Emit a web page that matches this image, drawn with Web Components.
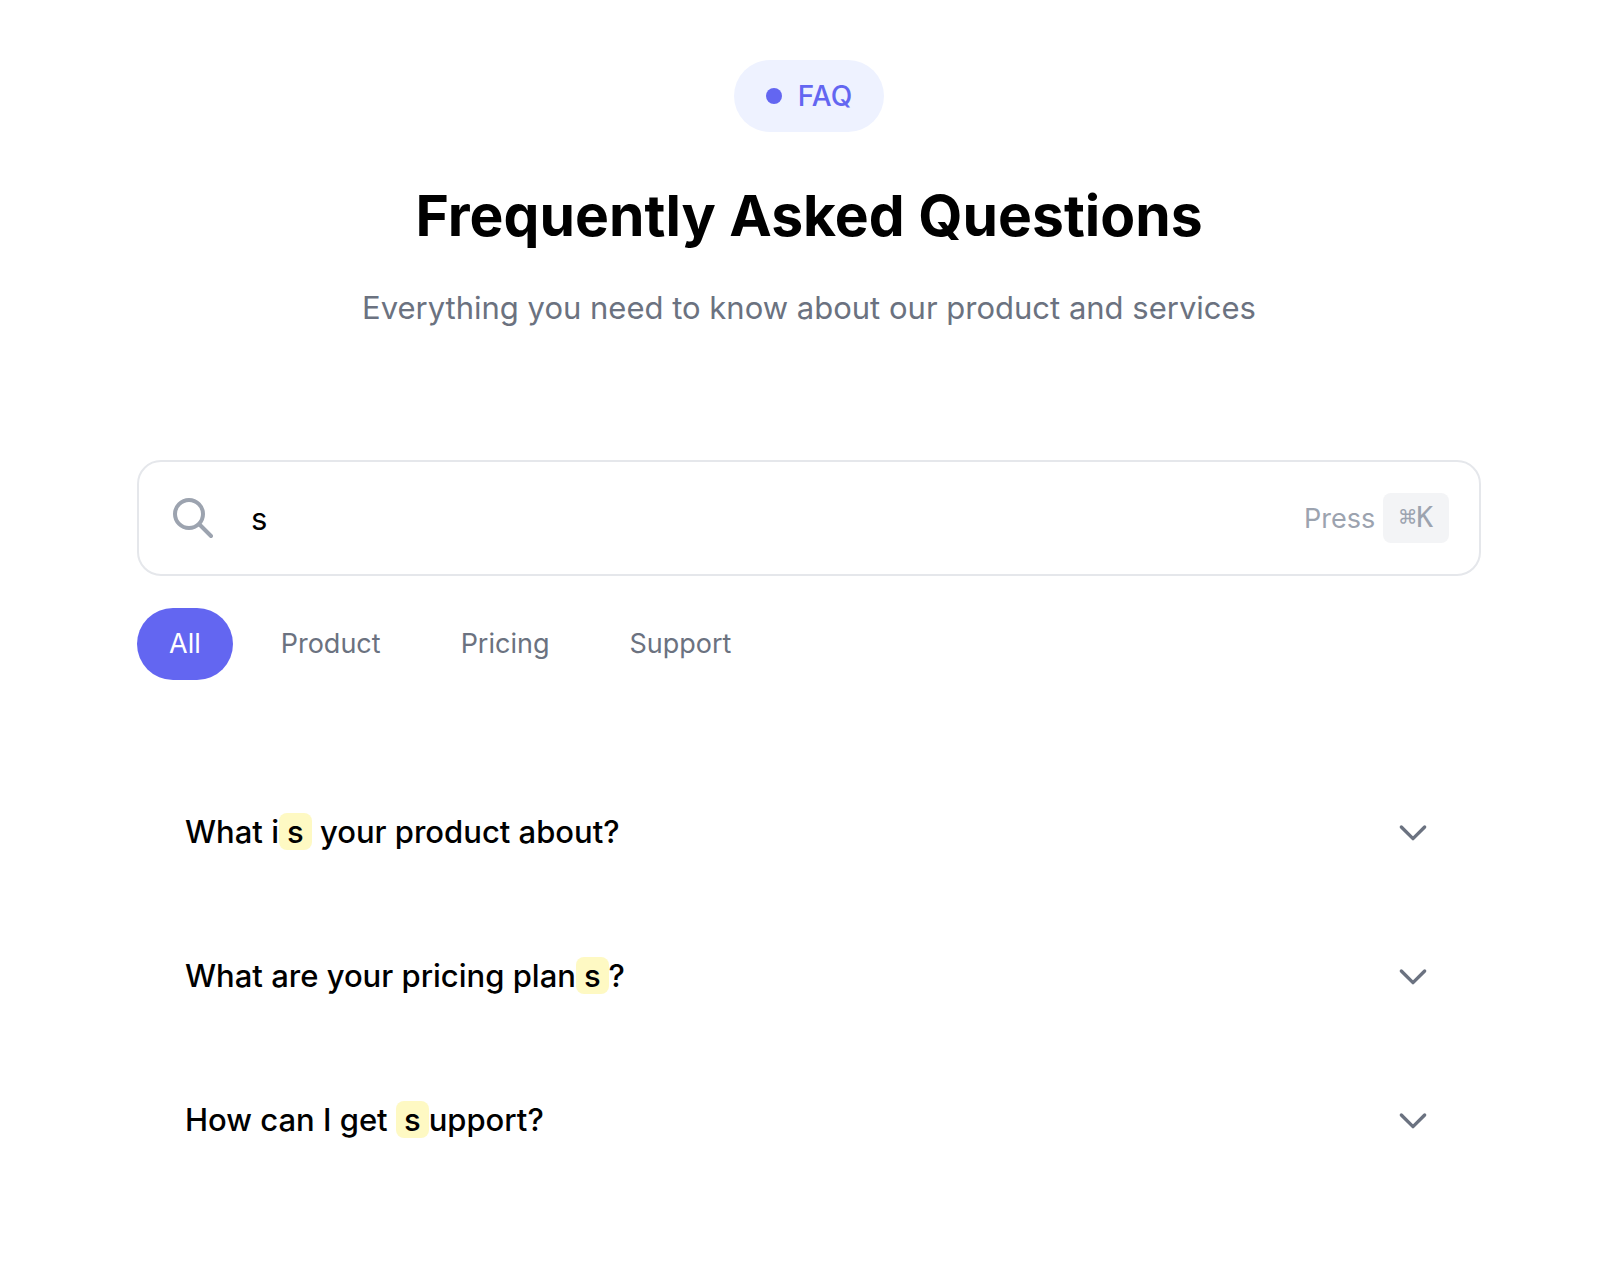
<!DOCTYPE html>
<html lang="en">
<head>
<meta charset="utf-8">
<meta name="viewport" content="width=device-width, initial-scale=1">
<title>FAQ</title>
<style>
    body {
        margin: 0;
        padding: 60px 30px 60px 24px;
        background: #fff;
        color: #000;
        font-family: Inter, "Liberation Sans", sans-serif;
    }
</style>
</head>
<body>
<faq-page>
    <faq-header slot="header" badge="FAQ" heading="Frequently Asked Questions">Everything you need to know about our product and services</faq-header>
    <faq-search value="s"></faq-search>
    <faq-tabs active="All" tabs="All,Product,Pricing,Support"></faq-tabs>
    <faq-list>
        <faq-item question="What is your product about?" term="s"></faq-item>
        <faq-item question="What are your pricing plans?" term="s"></faq-item>
        <faq-item question="How can I get support?" term="s"></faq-item>
    </faq-list>
</faq-page>

<script>
class FaqPage extends HTMLElement {
    constructor() {
        super();
        this.attachShadow({ mode: 'open' });
    }

    connectedCallback() {
        this.shadowRoot.innerHTML = `
            <style>
                :host {
                    display: block;
                    max-width: 1344px;
                    margin: 0 auto;
                }

                .controls {
                    display: flex;
                    flex-direction: column;
                    gap: 32px;
                    margin-top: 128px;
                }

                ::slotted(faq-list) {
                    margin-top: 48px;
                }
            </style>
            <main>
                <slot name="header"></slot>
                <div class="controls"><slot></slot></div>
            </main>`;
    }
}

class FaqHeader extends HTMLElement {
    constructor() {
        super();
        this.attachShadow({ mode: 'open' });
    }

    connectedCallback() {
        const badge = this.getAttribute('badge');
        const heading = this.getAttribute('heading');

        this.shadowRoot.innerHTML = `
            <style>
                :host {
                    display: block;
                }

                header {
                    display: flex;
                    flex-direction: column;
                    align-items: center;
                    text-align: center;
                }

                .badge {
                    display: flex;
                    align-items: center;
                    gap: 16px;
                    padding: 16px 32px;
                    border-radius: 36px;
                    background: #eef2ff;
                    color: #6366f1;
                    font-size: 28px;
                    font-weight: 500;
                    line-height: 40px;
                }

                .dot {
                    width: 16px;
                    height: 16px;
                    border-radius: 50%;
                    background: #6366f1;
                }

                h1 {
                    margin: 48px 0 32px;
                    font-size: 57px;
                    font-weight: 700;
                    line-height: 72px;
                }

                p {
                    margin: 0;
                    color: #6b7280;
                    font-size: 31px;
                    line-height: 48px;
                }
            </style>
            <header>
                <div class="badge"><span class="dot"></span><span>${badge}</span></div>
                <h1>${heading}</h1>
                <p><slot></slot></p>
            </header>`;
    }
}

class FaqSearch extends HTMLElement {
    constructor() {
        super();
        this.attachShadow({ mode: 'open' });
    }

    connectedCallback() {
        const value = this.getAttribute('value');

        this.shadowRoot.innerHTML = `
            <style>
                :host {
                    display: block;
                }

                .box {
                    display: flex;
                    align-items: center;
                    padding: 31px 30px;
                    border: 2px solid #e5e7eb;
                    border-radius: 24px;
                    background: #fff;
                }

                label {
                    display: flex;
                }

                svg {
                    width: 48px;
                    height: 48px;
                    color: #9ca3af;
                }

                input {
                    flex: 1;
                    min-width: 0;
                    height: 48px;
                    margin: 0 32px 0 34px;
                    padding: 0;
                    border: 0;
                    outline: 0;
                    background: none;
                    color: inherit;
                    font-family: inherit;
                    font-size: 31px;
                }

                .hint {
                    display: flex;
                    align-items: center;
                    gap: 8px;
                    color: #9ca3af;
                    font-size: 27px;
                }

                kbd {
                    padding: 8px 16px;
                    border-radius: 8px;
                    background: #f3f4f6;
                    font-family: "DejaVu Sans Mono", monospace;
                    font-size: 28px;
                    line-height: 34px;
                }
            </style>
            <div class="box">
                <label for="search" aria-label="Search questions">
                    <svg viewBox="0 0 24 24" fill="none" stroke="currentColor" stroke-width="2" stroke-linecap="round" stroke-linejoin="round">
                        <path d="M21 21l-6-6m2-5a7 7 0 11-14 0 7 7 0 0114 0z"/>
                    </svg>
                </label>
                <input id="search" type="text" value="${value}">
                <div class="hint"><span>Press</span><kbd>⌘K</kbd></div>
            </div>`;
    }
}

class FaqTabs extends HTMLElement {
    constructor() {
        super();
        this.attachShadow({ mode: 'open' });
    }

    connectedCallback() {
        const active = this.getAttribute('active');
        const tabs = this.getAttribute('tabs').split(',');

        this.shadowRoot.innerHTML = `
            <style>
                :host {
                    display: block;
                }

                nav {
                    display: flex;
                    flex-wrap: wrap;
                    gap: 16px;
                }

                button {
                    padding: 16px 32px;
                    border: 0;
                    border-radius: 36px;
                    background: none;
                    color: #6b7280;
                    font-family: inherit;
                    font-size: 27px;
                    line-height: 40px;
                    cursor: pointer;
                }

                button.active {
                    background: #6366f1;
                    color: #fff;
                }
            </style>
            <nav>
                ${tabs.map(tab => `<button type="button" class="${tab === active ? 'active' : ''}">${tab}</button>`).join('')}
            </nav>`;

        this.shadowRoot.querySelectorAll('button').forEach(button => {
            button.addEventListener('click', () => {
                this.shadowRoot.querySelector('.active').classList.remove('active');
                button.classList.add('active');
            });
        });
    }
}

class FaqList extends HTMLElement {
    constructor() {
        super();
        this.attachShadow({ mode: 'open' });
    }

    connectedCallback() {
        this.shadowRoot.innerHTML = `
            <style>
                :host {
                    display: flex;
                    flex-direction: column;
                }
            </style>
            <slot></slot>`;
    }
}

class FaqItem extends HTMLElement {
    constructor() {
        super();
        this.attachShadow({ mode: 'open' });
    }

    connectedCallback() {
        const question = this.getAttribute('question');
        const term = this.getAttribute('term');
        // Wrap every match of the search term
        const marked = question.split(term).join(`<mark>${term}</mark>`);

        this.shadowRoot.innerHTML = `
            <style>
                :host {
                    display: block;
                }

                button {
                    display: flex;
                    align-items: center;
                    justify-content: space-between;
                    width: 100%;
                    padding: 48px;
                    border: 0;
                    background: none;
                    color: inherit;
                    font-family: inherit;
                    font-size: 31px;
                    font-weight: 500;
                    line-height: 48px;
                    text-align: left;
                    cursor: pointer;
                }

                mark {
                    padding: 0 8px;
                    border-radius: 8px;
                    background: #fef9c3;
                    color: inherit;
                }

                svg {
                    flex: none;
                    width: 40px;
                    height: 40px;
                    color: #6b7280;
                }
            </style>
            <button type="button" aria-expanded="false">
                <span>${marked}</span>
                <svg viewBox="0 0 24 24" fill="none" stroke="currentColor" stroke-width="2" stroke-linecap="round" stroke-linejoin="round">
                    <path d="M19 9l-7 7-7-7"/>
                </svg>
            </button>`;
    }
}

customElements.define('faq-page', FaqPage);
customElements.define('faq-header', FaqHeader);
customElements.define('faq-search', FaqSearch);
customElements.define('faq-tabs', FaqTabs);
customElements.define('faq-list', FaqList);
customElements.define('faq-item', FaqItem);
</script>
</body>
</html>
